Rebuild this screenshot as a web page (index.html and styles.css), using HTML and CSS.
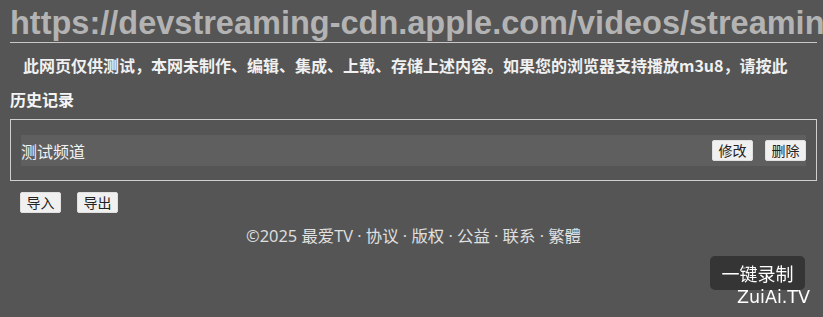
FILE: index.html
```html
<!DOCTYPE html>
<html lang="zh-CN">
<head>
<meta charset="utf-8">
<title>最爱TV</title>
<link rel="stylesheet" href="styles.css">
</head>
<body>
<div class="page">
  <h1 class="url">https://devstreaming-cdn.apple.com/videos/streaming</h1>
  <p class="notice">此网页仅供测试，本网未制作、编辑、集成、上载、存储上述内容。如果您的浏览器支持播放m3u8，请按此</p>
  <h2 class="history-title">历史记录</h2>
  <div class="history">
    <div class="history-row">
      <span class="channel">测试频道</span>
      <div class="row-actions">
        <button class="btn">修改</button>
        <button class="btn">删除</button>
      </div>
    </div>
  </div>
  <div class="tools">
    <button class="btn">导入</button>
    <button class="btn">导出</button>
  </div>
  <footer class="footer">©2025 最爱TV · 协议 · 版权 · 公益 · 联系 · 繁體</footer>
</div>
<div class="record">
  <div class="record-btn">一键录制</div>
  <div class="brand">ZuiAi.TV</div>
</div>
</body>
</html>
```

FILE: styles.css
```css
html, body {
  margin: 0;
  padding: 0;
  background: #555555;
  overflow: hidden;
}
body {
  font-family: "Noto Sans CJK SC", "Liberation Sans", sans-serif;
  color: #eeeeee;
}
.page {
  padding: 0 6px 0 10px;
}
.url {
  margin: 0;
  padding-top: 5px;
  width: 807px;
  font-family: "Liberation Sans", Arial, sans-serif;
  font-size: 32.5px;
  line-height: 37px;
  font-weight: bold;
  color: #b3b3b3;
  white-space: nowrap;
  border-bottom: 1px solid #c8c8c8;
}
.notice {
  margin: 10px 0 0;
  padding-left: 13px;
  font-size: 16px;
  line-height: 24px;
  font-weight: bold;
  color: #f0f0f0;
  white-space: nowrap;
}
.history-title {
  margin: 10px 0 0;
  font-size: 16px;
  line-height: 24px;
  font-weight: bold;
  color: #f5f5f5;
}
.history {
  margin-top: 8px;
  border: 1px solid #cfcfcf;
  padding: 15px 10px 14px;
}
.history-row {
  display: flex;
  align-items: center;
  justify-content: space-between;
  height: 31px;
  background: #5f5f5f;
}
.channel {
  font-size: 16px;
  color: #f2f2f2;
}
.row-actions {
  display: flex;
  gap: 12px;
}
.btn {
  width: 41px;
  height: 21px;
  padding: 0;
  border: 1px solid #e0e0e0;
  border-radius: 2px;
  background: #f0f0f0;
  color: #222222;
  font-family: "Noto Sans CJK SC", sans-serif;
  font-size: 14px;
  line-height: 19px;
}
.tools {
  display: flex;
  gap: 16px;
  margin-top: 11px;
  padding-left: 10px;
}
.footer {
  margin-top: 11px;
  text-align: center;
  font-family: "Open Sans", "Noto Sans CJK SC", sans-serif;
  font-size: 16.4px;
  line-height: 24px;
  color: #e0e0e0;
}
.record {
  position: fixed;
  right: 13px;
  bottom: 13px;
  display: flex;
  flex-direction: column;
  align-items: flex-end;
}
.record-btn {
  margin-right: 5px;
  width: 95px;
  height: 34px;
  border-radius: 5px;
  background: #353535;
  color: #ffffff;
  font-size: 18px;
  line-height: 34px;
  text-align: center;
}
.brand {
  font-family: "DejaVu Sans", sans-serif;
  font-size: 17.5px;
  line-height: 14px;
  color: #ffffff;
}
```
